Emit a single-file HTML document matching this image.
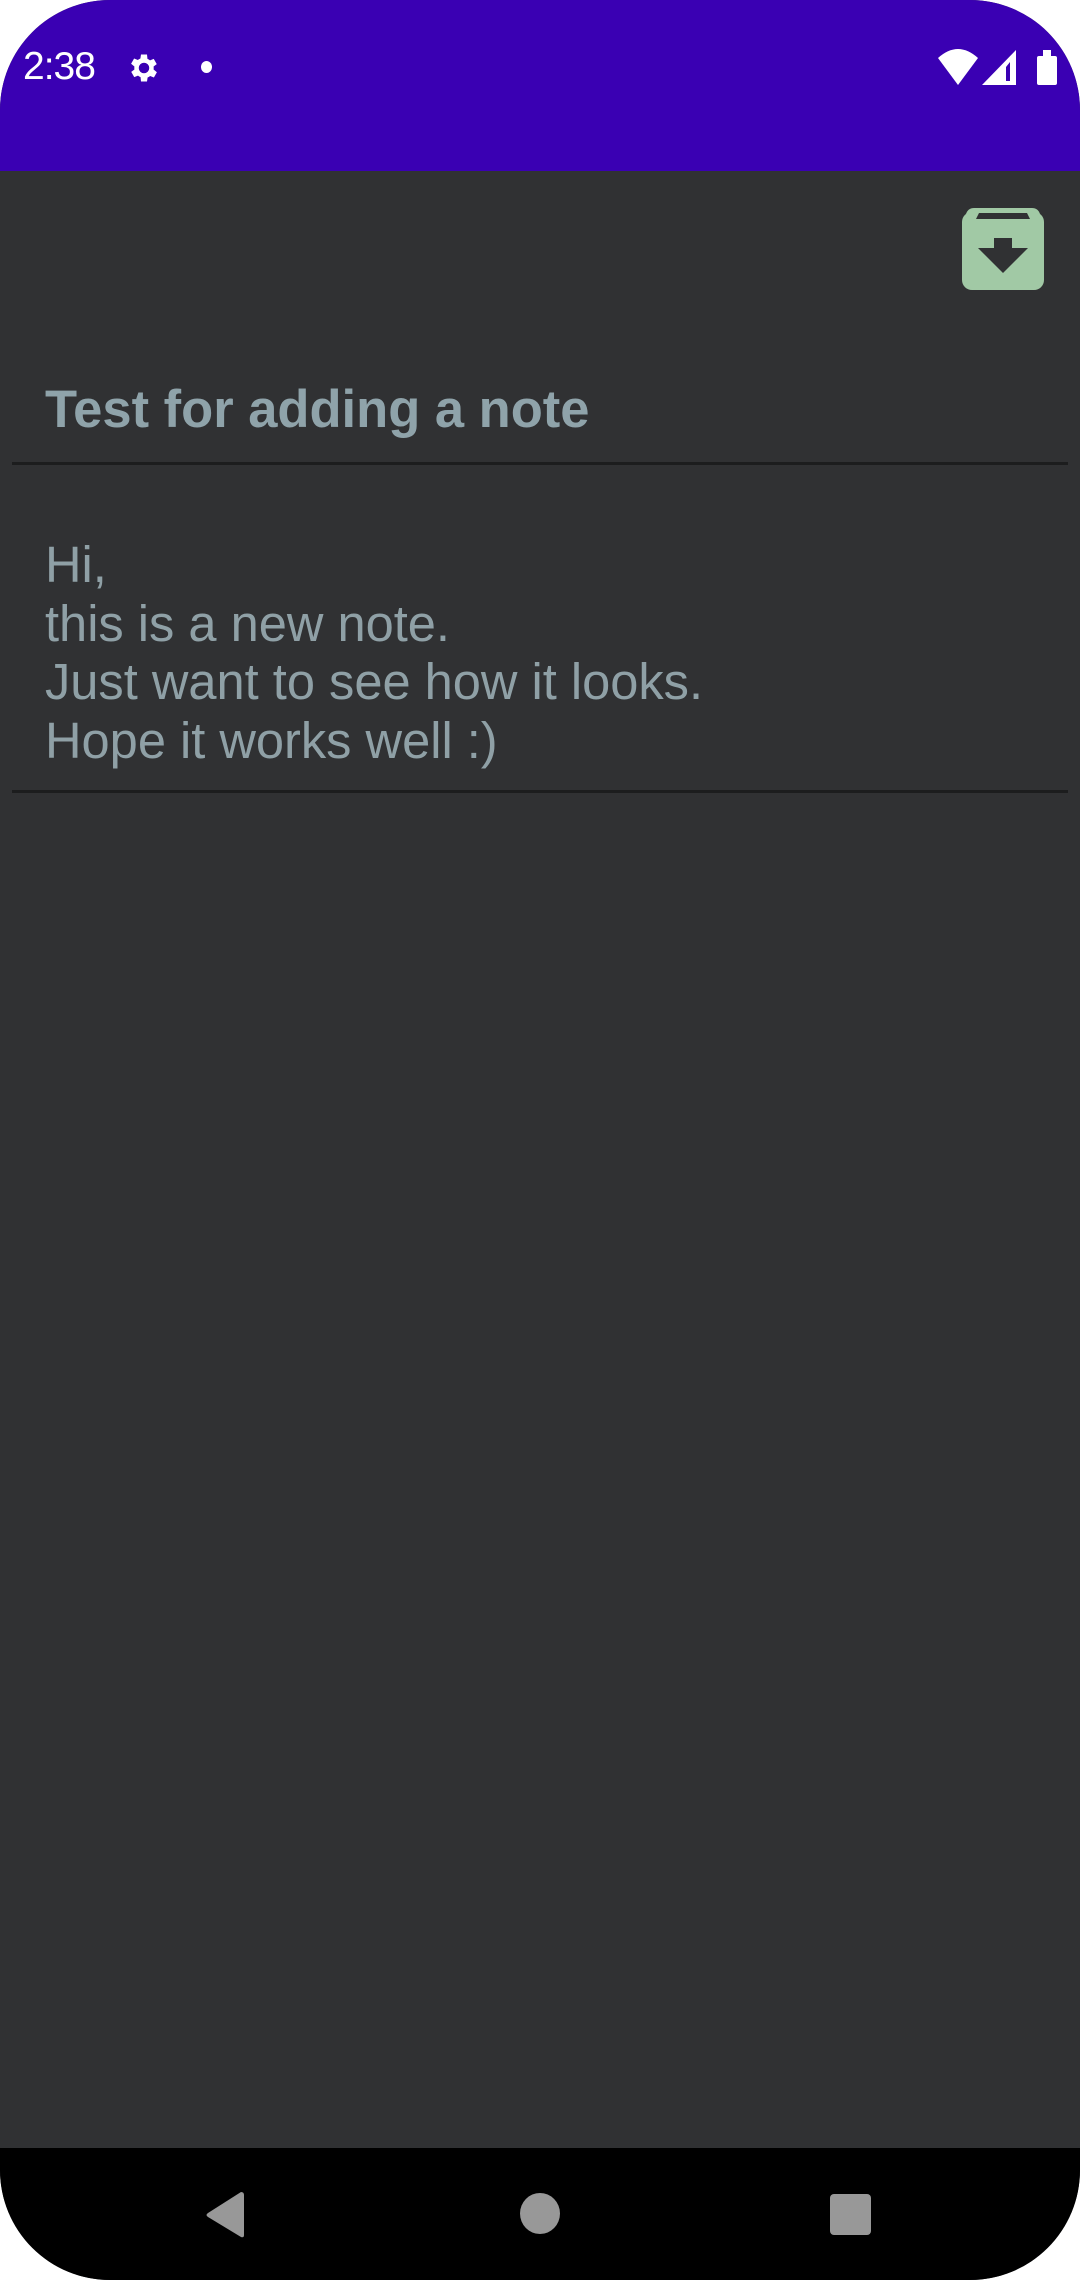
<!DOCTYPE html>
<html><head><meta charset="utf-8"><style>
html,body{margin:0;padding:0;background:#fff;}
body{width:1080px;height:2280px;position:relative;overflow:hidden;font-family:"Liberation Sans",Roboto,sans-serif;}
.screen{position:absolute;left:0;top:0;width:1080px;height:2280px;background:#303133;border-radius:110px;overflow:hidden;}
.status{position:absolute;left:0;top:0;width:1080px;height:171px;background:#3a00b3;}
.time{position:absolute;left:23px;top:45px;font-size:39px;color:#fff;letter-spacing:-1px;}
.nav{position:absolute;left:0;top:2148px;width:1080px;height:132px;background:#000;}
.title{position:absolute;left:45px;top:379px;font-size:52.5px;font-weight:bold;color:#8fa3aa;white-space:nowrap;}
.body{position:absolute;left:45px;top:536px;font-size:50.6px;line-height:58.6px;color:#8fa0a6;white-space:nowrap;}
.line{position:absolute;left:12px;width:1056px;height:3px;background:#1c1d1e;}
</style></head><body>
<div class="screen">
<div class="status">
<div class="time">2:38</div>
<svg style="position:absolute;left:126px;top:50px" width="36" height="36" viewBox="0 0 24 24"><path fill="#fff" d="M19.4 13a7.5 7.5 0 0 0 0-2l2.1-1.6-2-3.5-2.5 1a7 7 0 0 0-1.7-1L15 3h-4l-.4 2.7a7 7 0 0 0-1.7 1l-2.5-1-2 3.5L6.6 11a7.5 7.5 0 0 0 0 2l-2.1 1.6 2 3.5 2.5-1a7 7 0 0 0 1.7 1L11 21h4l.4-2.7a7 7 0 0 0 1.7-1l2.5 1 2-3.5zM13 15.5a3.5 3.5 0 1 1 0-7 3.5 3.5 0 0 1 0 7z" transform="translate(-1 0)"/></svg>
<div style="position:absolute;left:201px;top:61px;width:11px;height:12px;border-radius:50%;background:#fff"></div>
<svg style="position:absolute;left:936px;top:48px" width="44" height="38" viewBox="0 0 44 38"><path fill="#fff" d="M2 10 Q22 -8 42 10 L22 37 Z"/></svg>
<svg style="position:absolute;left:982px;top:50px" width="36" height="36" viewBox="0 0 36 36"><path fill="#fff" d="M34 0 V35 H0 Z"/><path fill="#3a00b3" d="M28 12 V31 H24 V17 Z"/></svg>
<div style="position:absolute;left:1037px;top:56px;width:20px;height:29px;background:#fff;border-radius:2px"></div>
<div style="position:absolute;left:1043px;top:50px;width:8px;height:7px;background:#fff"></div>
</div>
<svg style="position:absolute;left:962px;top:206px" width="82" height="84" viewBox="0 0 82 84"><rect x="0" y="6" width="82" height="78" rx="10" fill="#a1c9a5"/><path d="M4 8 Q6 2 12 2 H70 Q76 2 78 8 Z" fill="#a1c9a5"/><path d="M14 13 L17 7 H65 L68 13 Z" fill="#303133"/><path d="M32 32 H50 V42 H66 L41 67 L16 42 H32 Z" fill="#303133"/></svg>
<div class="title">Test for adding a note</div>
<div class="line" style="top:462px"></div>
<div class="body">Hi,<br>this is a new note.<br>Just want to see how it looks.<br>Hope it works well :)</div>
<div class="line" style="top:790px"></div>
<div class="nav">
<svg style="position:absolute;left:205px;top:44px" width="42" height="46" viewBox="0 0 42 46"><path d="M36 0 Q39 0 39 3 V43 Q39 46 36 45 L3 25 Q0 23 3 21 Z" fill="#989898"/></svg>
<div style="position:absolute;left:520px;top:45px;width:40px;height:41px;border-radius:50%;background:#989898"></div>
<div style="position:absolute;left:830px;top:46px;width:41px;height:41px;border-radius:4px;background:#989898"></div>
</div>
</div>
</body></html>
